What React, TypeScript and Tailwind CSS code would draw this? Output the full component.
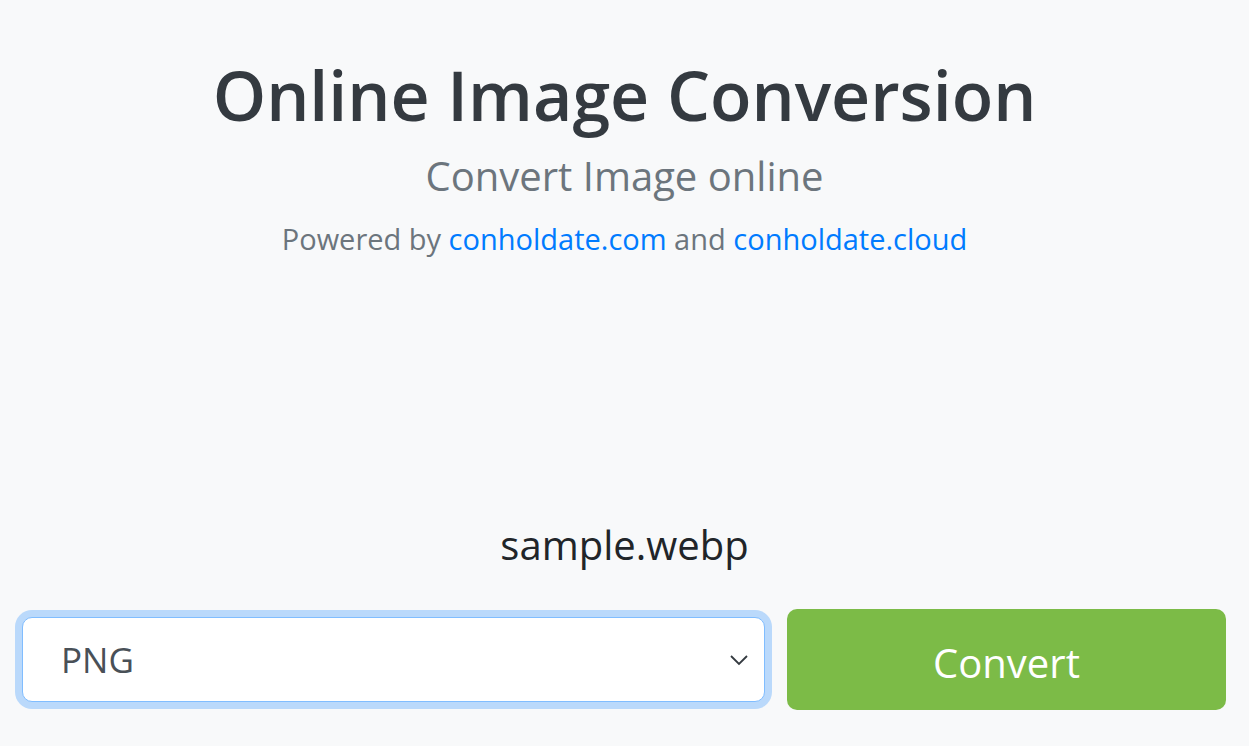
import React from "react";

const App: React.FC = () => {
  return (
    <main className="min-h-screen bg-[#f8f9fa] font-['Open_Sans',sans-serif] overflow-hidden">
      <section className="text-center pt-[54px]">
        <h1 className="text-[68px] leading-[1.2] font-semibold text-[#343a40]">
          Online Image Conversion
        </h1>
        <p className="mt-[16px] text-[40px] leading-[1.2] text-[#6c757d]">
          Convert Image online
        </p>
        <p className="mt-[22px] text-[29px] leading-[1.2] text-[#6c757d]">
          Powered by <a className="text-[#007bff]">conholdate.com</a> and{" "}
          <a className="text-[#007bff]">conholdate.cloud</a>
        </p>
      </section>

      <section className="mt-[265px] text-center">
        <p className="text-[40px] leading-[1.2] text-[#212529]">sample.webp</p>
      </section>

      <section className="mt-[40px] flex items-center gap-[22px] pl-[22px] pr-[23px]">
        <div className="w-[743px] h-[85px] relative rounded-[10px] border border-[#80bdff] bg-white shadow-[0_0_0_7px_rgba(0,123,255,0.25)] flex items-center pl-[38px]">
          <span className="text-[35px] text-[#495057]">PNG</span>
          <svg
            className="absolute right-[15px] top-1/2 -translate-y-1/2"
            width="20"
            height="12"
            viewBox="0 0 20 12"
            fill="none"
            stroke="#343a40"
            strokeWidth="1.8"
          >
            <path d="M2 2l8 8 8-8" />
          </svg>
        </div>
        <button className="w-[439px] h-[101px] rounded-[10px] bg-[#7cbb47] text-white text-[40px] pt-[6px]">
          Convert
        </button>
      </section>
    </main>
  );
};

export default App;
